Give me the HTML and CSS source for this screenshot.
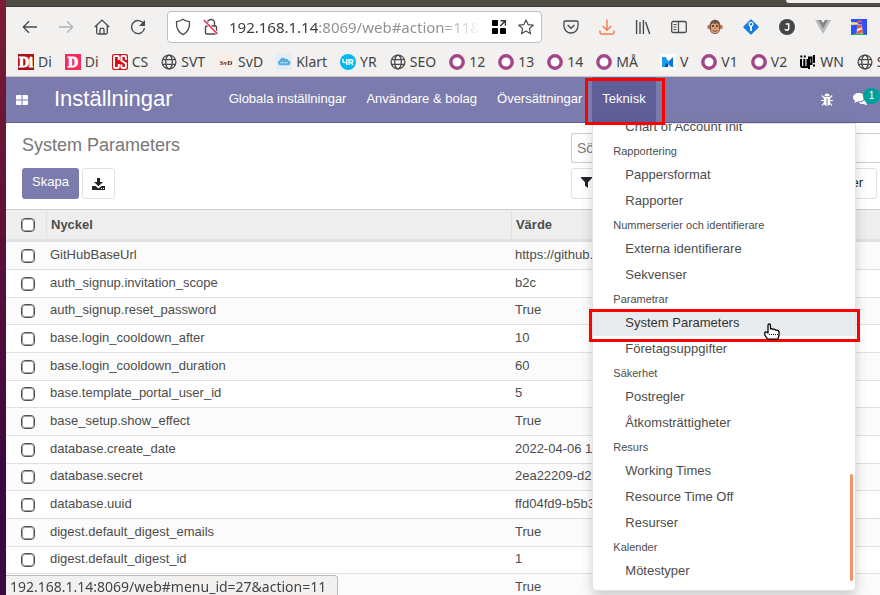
FILE: index.html
```html
<!DOCTYPE html>
<html lang="sv">
<head>
<meta charset="utf-8">
<meta name="viewport" content="width=device-width, initial-scale=1">
<title>System Parameters</title>
<link rel="stylesheet" href="styles.css">
</head>
<body>
<svg class="defs" aria-hidden="true">
  <symbol id="globe" viewBox="0 0 16 16"><g fill="none" stroke="#4a4a4a" stroke-width="1.3"><circle cx="8" cy="8" r="6.9"/><ellipse cx="8" cy="8" rx="3.3" ry="6.9"/><path d="M1.5 5.7h13M1.5 10.3h13"/></g></symbol>
  <symbol id="ring" viewBox="0 0 16 16"><circle cx="8" cy="8" r="6.2" fill="#fff" stroke="#a24689" stroke-width="3.4"/></symbol>
</svg>
<div class="window">
  <div class="titlebar"><div class="tab"></div></div>
  <div class="toolbar">
    <div class="tools">
      <button class="tool" aria-label="Back"><svg width="16" height="16" viewBox="0 0 16 16"><path d="M15 8H1.500M7 2.200L1.300 8L7 13.800" fill="none" stroke="#4a4a4a" stroke-width="1.3"/></svg></button>
      <button class="tool" aria-label="Forward"><svg width="16" height="16" viewBox="0 0 16 16"><path d="M1 8h13.500M9 2.200L14.700 8L9 13.800" fill="none" stroke="#b4b3b2" stroke-width="1.3"/></svg></button>
      <button class="tool" aria-label="Home"><svg width="16" height="16" viewBox="0 0 16 16"><path d="M.8 8L8 1.100L15.200 8M2.700 6.500V13.500Q2.700 15 4.200 15H11.800Q13.300 15 13.300 13.500V6.500M6 15V10.700Q6 9.200 8 9.200T10 10.700V15" fill="none" stroke="#4a4a4a" stroke-width="1.3"/></svg></button>
      <button class="tool" aria-label="Reload"><svg width="16" height="16" viewBox="0 0 16 16"><path d="M13.800 5A6.500 6.500 0 1 0 14.500 9" fill="none" stroke="#4a4a4a" stroke-width="1.4"/><path d="M15 1v6H9z" fill="#4a4a4a"/></svg></button>
    </div>
    <div class="urlbar">
      <svg width="16" height="18" viewBox="0 0 16 18"><path d="M8 1.200C6 2.800 4 3.300 1.500 3.700C1 10 3 14 8 16.600C13 14 15 10 14.500 3.700C12 3.300 10 2.800 8 1.200z" fill="none" stroke="#4a4a4a" stroke-width="1.3"/></svg>
      <svg class="lock" width="16" height="18" viewBox="0 0 16 18"><path d="M4.500 8V5a3.500 3.500 0 0 1 7 0v3" fill="none" stroke="#4a4a4a" stroke-width="1.4"/><rect x="2.500" y="8" width="11" height="8" rx="1.300" fill="none" stroke="#4a4a4a" stroke-width="1.4"/><path d="M1 2.500L15 16.300" stroke="#fff" stroke-width="3"/><path d="M.8 2L14.500 16" stroke="#e22850" stroke-width="1.4"/></svg>
      <div class="url"><span class="host">192.168.1.14</span>:8069/web#action=11&amp;</div>
      <svg width="14" height="14" viewBox="0 0 14 14"><path d="M0 1Q0 0 1 0H5Q6 0 6 1V5Q6 6 5 6H1Q0 6 0 5zM0 9Q0 8 1 8H5Q6 8 6 9V13Q6 14 5 14H1Q0 14 0 13zM8 9Q8 8 9 8H13Q14 8 14 9V13Q14 14 13 14H9Q8 14 8 13z"/><path d="M8.200 6L13 1.200M8.500 .8h5v5" fill="none" stroke="#333" stroke-width="1.500"/></svg>
      <svg class="star" width="16" height="16" viewBox="0 0 16 16"><path d="M8 1L10.100 5.600L15.200 6.200L11.400 9.600L12.500 14.700L8 12.100L3.500 14.700L4.600 9.600L.8 6.200L5.900 5.600z" fill="none" stroke="#4a4a4a" stroke-width="1.200" stroke-linejoin="round"/></svg>
    </div>
    <div class="tools">
      <button class="tool" aria-label="Pocket"><svg width="16" height="16" viewBox="0 0 16 16"><path d="M2.300 2H13.700Q15 2 15 3.300V7A7 7 0 0 1 1 7V3.300Q1 2 2.300 2zM4.600 6L8 9.300L11.400 6" fill="none" stroke="#4a4a4a" stroke-width="1.300"/></svg></button>
      <button class="tool" aria-label="Downloads"><svg width="16" height="16" viewBox="0 0 16 16"><path d="M8 .5v10.500M3.700 7L8 11.200L12.300 7M1 11.500v1.500Q1 15 3 15H13Q15 15 15 13v-1.500" fill="none" stroke="#f8794c" stroke-width="1.400"/></svg></button>
      <button class="tool" aria-label="Library"><svg width="16" height="16" viewBox="0 0 16 16"><path d="M1.600 1v14M5 3v12M8.400 1v14M10.600 3L14.700 15" fill="none" stroke="#4a4a4a" stroke-width="1.400"/></svg></button>
      <button class="tool" aria-label="Sidebar"><svg width="16" height="16" viewBox="0 0 16 16"><rect x=".7" y="2.500" width="14.600" height="11" rx="1.500" fill="none" stroke="#4a4a4a" stroke-width="1.300"/><path d="M7.500 2.500v11M2.500 5.500h3M2.500 8h3M2.500 10.500h3" stroke="#4a4a4a" stroke-width="1.200"/></svg></button>
      <button class="tool" aria-label="Monkey"><svg width="16" height="16" viewBox="0 0 16 16"><circle cx="2.300" cy="8" r="2.200" fill="#c97860"/><circle cx="13.700" cy="8" r="2.200" fill="#c97860"/><path d="M8 .8C12 1 13.500 4 13.300 8C13.200 13 11 15 8 15S2.800 13 2.700 8C2.500 4 4 1 8 .8z" fill="#73503f"/><path d="M8 5.300C9.500 3 12.500 4.500 12 7.500C11.500 9 12.500 10 12 11.500C11 14 9.500 14.300 8 14.300S5 14 4 11.500C3.500 10 4.500 9 4 7.500C3.500 4.500 6.500 3 8 5.300z" fill="#dfa17a"/><circle cx="6" cy="7" r="1" fill="#37251f"/><circle cx="10" cy="7" r="1" fill="#37251f"/><path d="M5.500 11.500Q8 13.300 10.500 11.500M7.200 9.300h.5M8.500 9.300h.5" stroke="#76402e" stroke-width=".9" fill="none"/></svg></button>
      <button class="tool" aria-label="Git"><svg width="16" height="16" viewBox="0 0 16 16"><rect x="2.300" y="2.300" width="11.400" height="11.400" rx="1" transform="rotate(45 8 8)" fill="#167bdc"/><circle cx="8" cy="5.300" r="1.900" fill="none" stroke="#fff" stroke-width="1.200"/><path d="M8 7v5" stroke="#fff" stroke-width="1.800"/></svg></button>
      <button class="tool" aria-label="J"><svg width="16" height="16" viewBox="0 0 16 16"><circle cx="8" cy="8" r="8" fill="#454545"/><path d="M6.700 5h3v4.200Q9.700 11.200 8 11.200T6 9.800" fill="none" stroke="#fff" stroke-width="1.500"/></svg></button>
      <button class="tool" aria-label="Vue"><svg width="16" height="16" viewBox="0 0 16 16"><path d="M0 1h16L8 15z" fill="#b9b9b9"/><path d="M3.200 1h9.600L8 9.500z" fill="#858585"/><path d="M6.200 1h3.600L8 4z" fill="#f2f1f0"/></svg></button>
      <button class="tool" aria-label="Lighthouse"><svg width="16" height="16" viewBox="0 0 16 16"><path d="M0 0h16v16H0z" fill="#304ffe"/><path d="M0 3l7 .5v2L0 6z" fill="#fbe77b"/><path d="M0 16Q8 12 16 16z" fill="#17bd55"/><path d="M6.300 5.500h4.500l1 9H5.500z" fill="#eee"/><path d="M6 2.500L8.500.7L11 2.500v1H6zM6.200 6h4.700v2.500L6 10zM5.900 12.500L11.300 10l.5 3.500L5.700 15z" fill="#ef5a34"/></svg></button>
    </div>
  </div>
  <nav class="bookmarks" aria-label="Bookmarks">
    <a href="#"><svg width="16" height="16"><path d="M0 0h16v16H0z" fill="#ad0f13"/><text class="slab" x="8" y="13" text-anchor="middle">Di</text></svg>Di</a>
    <a href="#"><svg width="16" height="16"><path d="M0 0h16v16H0z" fill="#f52c64"/><text class="slab" x="8" y="13" text-anchor="middle">D</text></svg>Di</a>
    <a href="#"><svg width="16" height="16" viewBox="0 0 16 16"><rect width="16" height="16" rx="2" fill="#d80d19"/><path d="M6.800 6V3.200Q6.800 2 5.600 2H3.200Q2 2 2 3.200V12.800Q2 14 3.200 14H5.600Q6.800 14 6.800 12.800V10M13.900 6V3.200Q13.900 2 12.700 2H10.600Q9.400 2 9.400 3.200V6.500L13.900 9.500V12.800Q13.900 14 12.700 14H10.600Q9.400 14 9.400 12.800V10.500" fill="none" stroke="#fff" stroke-width="2"/></svg>CS</a>
    <a href="#"><svg width="16" height="16"><use href="#globe"/></svg>SVT</a>
    <a href="#"><svg width="16" height="16"><path d="M0 0h16v16H0z" fill="#fceee5"/><text class="mini" x="8" y="11" text-anchor="middle">SvD</text></svg>SvD</a>
    <a href="#"><svg width="16" height="16" viewBox="0 0 16 16"><path d="M0 0h16v16H0z" fill="#e2edf9"/><path d="M4 11.200a2.500 2.500 0 0 1-.5-4.800C4.500 3.300 8 3 9.500 5C11 4.500 12 5.500 12.300 6.500C15.500 7 15 11 12.500 11.200z" fill="#58acde"/><path d="M4.500 8.700h7" stroke="#d9f0fc" stroke-width="1.200" stroke-dasharray="1 .5"/></svg>Klart</a>
    <a href="#"><svg width="16" height="16" viewBox="0 0 16 16"><circle cx="8" cy="8" r="8" fill="#00b9f1"/><path d="M3 5v2.500Q3 8.500 4 8.500H6.800M6.800 5v6M9 11V5.700h2.500Q13 5.700 13 7T11.500 8.500H9M11 8.500L13 11" fill="none" stroke="#fff" stroke-width="1.400"/></svg>YR</a>
    <a href="#"><svg width="16" height="16"><use href="#globe"/></svg>SEO</a>
    <a href="#"><svg width="16" height="16"><use href="#ring"/></svg>12</a>
    <a href="#"><svg width="16" height="16"><use href="#ring"/></svg>13</a>
    <a href="#"><svg width="16" height="16"><use href="#ring"/></svg>14</a>
    <a href="#"><svg width="16" height="16"><use href="#ring"/></svg>MÅ</a>
    <span class="divider"></span>
    <a href="#"><svg width="16" height="16" viewBox="0 0 16 16"><path d="M0 0h16v16H0z" fill="#fff"/><path d="M2 3h3l3 4v6H2z" fill="#123b9b"/><path d="M2 3h3l5 6 4 4h-3L6 9l-1 4H2z" fill="#1a9bf0"/><path d="M9 7l4-4v10l-4-3z" fill="#0879dc"/></svg>V</a>
    <a href="#"><svg width="16" height="16"><use href="#ring"/></svg>V1</a>
    <a href="#"><svg width="16" height="16"><use href="#ring"/></svg>V2</a>
    <a href="#"><svg width="16" height="16" viewBox="0 0 16 16"><path d="M1 5v6.500Q1 13 2.500 13H7.500V5M4.300 5v7.500M9 15V3.500h2.500V10H9M14 1v8M14 10.500v2M.3 2.500h2M3.800 2.500h2" fill="none" stroke="#000" stroke-width="2"/></svg>WN</a>
    <a href="#"><svg width="16" height="16"><use href="#globe"/></svg>S</a>
  </nav>
  <header class="appbar">
    <button class="apps" aria-label="Apps"><svg width="12" height="10" viewBox="0 0 12 10"><path d="M1 0h4.500v4.500H0V1Q0 0 1 0zM6.500 0H11Q12 0 12 1V4.500H6.500zM0 5.500h5.500V10H1Q0 10 0 9zM6.500 5.500H12V9Q12 10 11 10H6.500z" fill="#fff"/></svg></button>
    <a class="brand" href="#">Inställningar</a>
    <nav class="menu">
      <a href="#">Globala inställningar</a>
      <a href="#">Användare &amp; bolag</a>
      <a href="#">Översättningar</a>
      <div class="open">
        <a class="active" href="#">Teknisk</a>
        <span class="mark mark-tab"></span>
        <div class="dropdown">
          <div class="list">
            <a href="#">Chart of Account Init</a>
            <h3>Rapportering</h3>
            <a href="#">Pappersformat</a>
            <a href="#">Rapporter</a>
            <h3>Nummerserier och identifierare</h3>
            <a href="#">Externa identifierare</a>
            <a href="#">Sekvenser</a>
            <h3>Parametrar</h3>
            <a class="hover" href="#">System Parameters</a>
            <a href="#">Företagsuppgifter</a>
            <h3>Säkerhet</h3>
            <a href="#">Postregler</a>
            <a href="#">Åtkomsträttigheter</a>
            <h3>Resurs</h3>
            <a href="#">Working Times</a>
            <a href="#">Resource Time Off</a>
            <a href="#">Resurser</a>
            <h3>Kalender</h3>
            <a href="#">Mötestyper</a>
          </div>
          <span class="thumb"></span>
          <span class="mark mark-item"></span>
          <svg class="pointer" width="16" height="18" viewBox="0 0 16 18"><path d="M4 10V2.500Q4 1 5.200 1T6.500 2.500V6Q8 5 9 6.500Q10.500 5.500 11.500 7.200Q14.500 6.500 15 9V12L14 16.200H3.500L.8 12V9.500Q1 8.500 2.300 9z" fill="#fff" stroke="#000" stroke-width="1.300" stroke-linejoin="round"/><path d="M5 11.500h9" stroke="#000" stroke-dasharray="1 1"/></svg>
        </div>
      </div>
    </nav>
    <div class="systray">
      <button aria-label="Debug"><svg width="12" height="13" viewBox="0 0 12 13"><path d="M3.500 3a2.500 2.500 0 0 1 5 0zM2.800 3.700h6.400V9.500A3.200 3.200 0 0 1 2.800 9.500z" fill="#fff"/><path d="M.8 2.500L3 4.800M11.200 2.500L9 4.800M0 7.500h3M12 7.500H9M1 12.300L3.500 9.800M11 12.300L8.500 9.800" stroke="#fff" stroke-width="1.200"/><path d="M6 5.500v6.700" stroke="#7c7bad"/></svg></button>
      <button class="chat" aria-label="Messages"><svg width="15" height="13" viewBox="0 0 15 13"><path d="M5.800 0C9 0 11.500 2 11.500 4.300S9 8.600 5.800 8.600Q4.800 8.600 4 8.400Q2.700 9.500 1 9.700Q2 8.800 2.200 7.600C.8 6.900 0 5.700 0 4.300C0 2 2.600 0 5.800 0z" fill="#fff"/><path d="M12.500 3.500C15.600 5.500 15.500 8.500 13 10.200Q13.300 11.300 14.300 12.200Q12.500 12.200 11 11Q7.500 11.500 5.500 9.600Q12 9.500 12.500 3.500z" fill="#fff"/></svg><span class="badge">1</span></button>
    </div>
  </header>
  <section class="panel">
    <div class="left">
      <h1>System Parameters</h1>
      <div class="buttons">
        <button class="primary">Skapa</button>
        <button class="export" aria-label="Export"><svg width="13" height="12" viewBox="0 0 13 12"><path d="M5 0h3v4h3L6.500 8.300L2 4h3zM0 8h3.500L6.500 10.500L9.500 8H13v4H0z" fill="#212529"/><path d="M9 10.500h1M11 10.500h1" stroke="#fff"/></svg></button>
      </div>
    </div>
    <div class="right">
      <input class="search" type="text" placeholder="Sök..." aria-label="Sök">
      <div class="filters">
        <button aria-label="Filter"><svg width="11" height="11" viewBox="0 0 11 11"><path d="M0 0h11v1L7 5.300V11L4 8.700V5.300L0 1z" fill="#212529"/></svg></button>
        <button>Favoriter</button>
      </div>
    </div>
  </section>
  <table class="grid">
    <colgroup><col class="c-check"><col class="c-key"><col></colgroup>
    <thead><tr><th><input type="checkbox" aria-label="Alla"></th><th>Nyckel</th><th>Värde</th></tr></thead>
    <tbody>
      <tr><td><input type="checkbox" aria-label="GitHubBaseUrl"></td><td>GitHubBaseUrl</td><td>https://github.com</td></tr>
      <tr><td><input type="checkbox" aria-label="auth_signup.invitation_scope"></td><td>auth_signup.invitation_scope</td><td>b2c</td></tr>
      <tr><td><input type="checkbox" aria-label="auth_signup.reset_password"></td><td>auth_signup.reset_password</td><td>True</td></tr>
      <tr><td><input type="checkbox" aria-label="base.login_cooldown_after"></td><td>base.login_cooldown_after</td><td>10</td></tr>
      <tr><td><input type="checkbox" aria-label="base.login_cooldown_duration"></td><td>base.login_cooldown_duration</td><td>60</td></tr>
      <tr><td><input type="checkbox" aria-label="base.template_portal_user_id"></td><td>base.template_portal_user_id</td><td>5</td></tr>
      <tr><td><input type="checkbox" aria-label="base_setup.show_effect"></td><td>base_setup.show_effect</td><td>True</td></tr>
      <tr><td><input type="checkbox" aria-label="database.create_date"></td><td>database.create_date</td><td>2022-04-06 1</td></tr>
      <tr><td><input type="checkbox" aria-label="database.secret"></td><td>database.secret</td><td>2ea22209-d2</td></tr>
      <tr><td><input type="checkbox" aria-label="database.uuid"></td><td>database.uuid</td><td>ffd04fd9-b5b3</td></tr>
      <tr><td><input type="checkbox" aria-label="digest.default_digest_emails"></td><td>digest.default_digest_emails</td><td>True</td></tr>
      <tr><td><input type="checkbox" aria-label="digest.default_digest_id"></td><td>digest.default_digest_id</td><td>1</td></tr>
      <tr><td></td><td></td><td>True</td></tr>
    </tbody>
  </table>
</div>
<div class="status">192.168.1.14:8069/web#menu_id=27&amp;action=11</div>
</body>
</html>
```
FILE: styles.css
```css
* { box-sizing: border-box; }
body {
  margin: 0;
  height: 100vh;
  overflow: hidden;
  padding-left: 6px;
  background: linear-gradient(#7c1c34, #5c1038 40%, #3c0840 80%);
  font: 13px/20px "Liberation Sans", Arial, sans-serif;
  color: #4c4c4c;
}
a { color: inherit; text-decoration: none; }
button { font: inherit; color: inherit; border: 0; background: none; padding: 0; }
svg { display: block; flex: none; }
.defs { position: absolute; width: 0; height: 0; }
.window { min-height: 100vh; background: #fff; }

.titlebar { height: 7px; background: #504c44; border-bottom: 1px solid #3c3b37; }
.tab { margin-left: auto; width: 94px; height: 3px; background: #f2f1f0; border-radius: 0 0 0 3px; }

.toolbar { display: flex; align-items: center; gap: 11px; height: 40px; padding: 0 3px 0 6px; background: #f2f1f0; }
.tools { display: flex; }
.tool { width: 36px; height: 32px; display: flex; align-items: center; justify-content: center; }
.urlbar {
  flex: 1; min-width: 0; height: 32px; display: flex; align-items: center; gap: 12px;
  padding: 0 7px; background: #fff; border: 1px solid #c2c0bd; border-radius: 4px;
}
.lock { margin-right: -2px; }
.url {
  flex: 1; min-width: 0; overflow: hidden; white-space: nowrap;
  font: 15px/22px "Noto Sans", "Open Sans", sans-serif; color: #929292;
  mask-image: linear-gradient(to right, #000 85%, transparent);
}
.host { color: #3c3c3c; }

.bookmarks {
  display: flex; align-items: center; gap: 13px; height: 30px; padding-left: 12px;
  overflow: hidden; white-space: nowrap; background: #f2f1f0; border-bottom: 1px solid #cccac7;
  font: 14px/20px "Noto Sans", "Open Sans", sans-serif; color: #444;
}
.bookmarks a { display: flex; align-items: center; gap: 4px; }
.divider { width: 1px; height: 22px; margin: 0 -2px; background: #c8c6c4; }
.slab { font: bold 14px "Liberation Serif", serif; fill: #fff; stroke: #fff; stroke-width: 1px; }
.mini { font: bold 7px "Liberation Serif", serif; fill: #222; }

.appbar {
  display: flex; align-items: center; height: 46px; padding-left: 10px;
  background: #7c7bad; border-bottom: 1px solid #5f5e97; color: #fff;
}
.brand { margin-left: 26px; padding-bottom: 2px; font-size: 22px; line-height: 30px; }
.menu { display: flex; margin-left: 46px; height: 45px; line-height: 43px; }
.menu > a, .active { display: block; padding: 0 10px; white-space: nowrap; }
.open { position: relative; }
.active { height: 45px; background: #5f5e97; }
.mark { position: absolute; border: 3px solid #f00; z-index: 3; }
.mark-tab { inset: 1px -9px -3px -7px; }
.dropdown {
  position: absolute; top: 46px; left: 0; width: 264px; height: 468px; z-index: 2;
  background: #fff; border: 1px solid #dee2e6; border-radius: 0 0 4px 4px;
  box-shadow: 0 6px 12px rgba(0, 0, 0, .18); color: #4c4c4c;
}
.list { height: 100%; overflow: hidden; display: flex; flex-direction: column; justify-content: flex-end; padding-bottom: 6px; }
.list a { flex: none; padding-left: 32px; line-height: 26px; }
.list h3 { flex: none; margin: 0; padding-left: 20px; font-size: 11px; font-weight: 400; line-height: 22px; }
.list .hover { background: #e9ecef; color: #333; }
.thumb { position: absolute; right: 2px; bottom: 9px; width: 3px; height: 107px; border-radius: 2px; background: #f8946c; }
.mark-item { top: 185px; left: -4px; right: -5px; height: 33px; }
.pointer { position: absolute; top: 199px; left: 171px; z-index: 4; }
.systray { display: flex; align-items: center; gap: 20px; margin-left: auto; padding-right: 12px; }
.chat { position: relative; }
.badge {
  position: absolute; top: -5px; left: 10px; width: 17px; height: 16px; border-radius: 8px;
  background: #00a09d; font-size: 10px; line-height: 15px; text-align: center;
}

.panel { display: flex; height: 86px; }
.left { flex: 1; padding: 10px 0 0 16px; }
h1 { margin: 0; font-size: 18px; font-weight: 400; line-height: 24px; color: #777; }
.buttons { display: flex; gap: 3px; margin-top: 11px; }
.primary { height: 31px; padding: 0 10px 3px; border-radius: 3px; background: #7c7bad; color: #fff; }
.export { display: flex; align-items: center; justify-content: center; width: 33px; height: 31px; border: 1px solid #dee2e6; border-radius: 3px; }
.right { width: 309px; padding-top: 10px; }
.search {
  display: block; width: 100%; height: 30px; padding: 0 5px; border: 1px solid #ccc; border-right: 0;
  border-radius: 3px 0 0 3px; font: inherit; font-size: 14px;
}
.search::placeholder { color: #808080; opacity: 1; }
.filters {
  display: flex; justify-content: space-between; align-items: center; height: 31px; margin: 5px 3px 0 0;
  padding: 0 13px 2px 9px; border: 1px solid #dee2e6; border-radius: 3px; color: #212529;
}

.grid { width: 100%; table-layout: fixed; border-collapse: separate; border-spacing: 0; }
.c-check { width: 41px; }
.c-key { width: 53.2%; }
th { height: 33px; padding: 0 0 0 4px; text-align: left; background: #eee; border-top: 1px solid #ccc; border-bottom: 3px solid #dee2e6; border-right: 1px solid #dee2e6; }
td { height: 28px; padding: 0 0 2px 3px; border-bottom: 1px solid #dee2e6; }
tr:nth-child(3n) td { height: 27px; }
tbody tr:nth-child(odd) { background: #fbfbfb; }
th:first-child, td:first-child { padding: 0 0 0 15px; }
th:last-child { border-right: 0; }
input[type="checkbox"] {
  appearance: none; display: block; width: 14px; height: 14px; margin: 0;
  border: 1px solid #4d5357; outline: 1px solid #9aa0a4; outline-offset: -2px; border-radius: 4px; background: #fff;
}

.status {
  position: fixed; left: 6px; bottom: 0; height: 20px; padding: 0 11px 0 4px; z-index: 5;
  background: #f2f1f0; border: 1px solid #bbb; border-width: 1px 1px 0 0; border-radius: 0 4px 0 0;
  font: 14px/22px "Noto Sans", "Open Sans", sans-serif; color: #444;
}
```
